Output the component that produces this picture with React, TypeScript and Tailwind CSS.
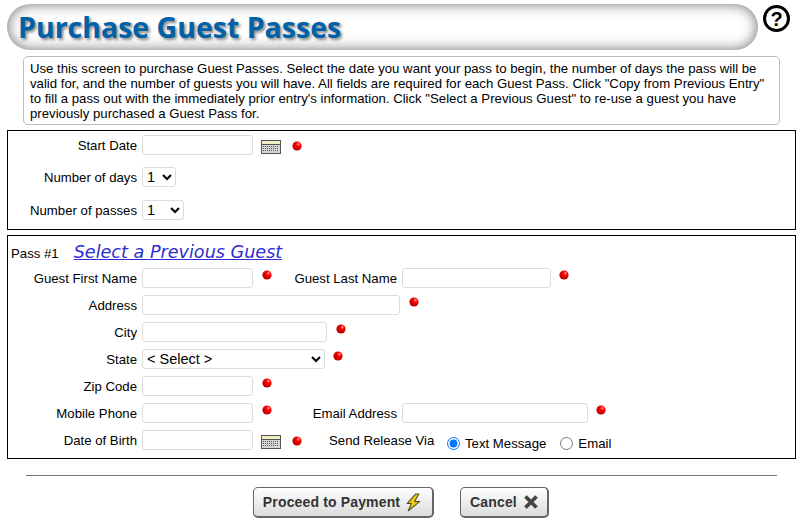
import type { ReactNode } from "react";

const inputClass =
    "h-5 rounded-[3px] border border-[#dcdcdc] bg-white outline-none";
const selectClass =
    "h-5 rounded-[3px] border border-[#dcdcdc] bg-white text-[14.5px] leading-none text-black";

const RedDot = ({ className = "" }: { className?: string }) => (
    <svg viewBox="0 0 10 10" className={`h-[10px] w-[10px] shrink-0 ${className}`}>
        <defs>
            <radialGradient id="dot" cx="65%" cy="30%" r="75%">
                <stop offset="0%" stopColor="#ffb0b0" />
                <stop offset="30%" stopColor="#ff0000" />
                <stop offset="100%" stopColor="#b00000" />
            </radialGradient>
        </defs>
        <circle cx="5" cy="5" r="4.6" fill="url(#dot)" />
    </svg>
);

const CalendarIcon = ({ className = "" }: { className?: string }) => (
    <svg viewBox="0 0 20 14" className={`h-[14px] w-5 shrink-0 ${className}`}>
        <rect x="0.5" y="0.5" width="19" height="13" fill="#d6d6d6" stroke="#555" />
        <rect x="1" y="1" width="18" height="3" fill="#f3efc0" />
        <rect x="1" y="4" width="18" height="1" fill="#555" />
        <path d="M2 6.5h12M2 8.5h12M2 10.5h12" stroke="#555" strokeWidth="1" strokeDasharray="1 1" />
        <path d="M14 6.5h4M14 8.5h4M14 10.5h4" stroke="#e02020" strokeWidth="1" strokeDasharray="1 1" />
    </svg>
);

const Label = ({ children, className = "w-[134px]" }: { children: ReactNode; className?: string }) => (
    <label className={`mt-[2px] shrink-0 pr-[5px] text-right text-[13.2px] leading-4 text-black ${className}`}>
        {children}
    </label>
);

const Row = ({ children, className = "h-[27px]" }: { children: ReactNode; className?: string }) => (
    <div className={`flex items-center ${className}`}>{children}</div>
);

const App = () => {
    return (
        <div className="h-[523px] w-[810px] overflow-hidden bg-white font-['Liberation_Sans',Arial,sans-serif] text-black">

            {/* TITLE */}
            <div className="flex items-start pl-[7px] pt-1">
                <div className="flex h-[46px] w-[751px] items-center rounded-full bg-white pl-[11px] shadow-[inset_0_0_14px_#707070]">
                    <h1 className="font-['Open_Sans',sans-serif] text-[28.5px] font-bold leading-none text-[#0061a9] [text-shadow:2px_2px_3px_#888]">
                        Purchase Guest Passes
                    </h1>
                </div>
                <div className="ml-[5px] mt-[1px] flex h-[27px] w-[27px] items-center justify-center rounded-full border-[3px] border-black text-xl font-bold leading-none">
                    ?
                </div>
            </div>

            {/* HELP */}
            <div className="ml-[23px] mt-[6px] h-[69px] w-[757px] whitespace-nowrap rounded-[5px] border border-[#bbbbbb] px-[6px] pt-1 text-[13.2px] leading-[15px]">
                Use this screen to purchase Guest Passes. Select the date you want your pass to begin, the number of days the pass will be
                <br />
                valid for, and the number of guests you will have. All fields are required for each Guest Pass. Click "Copy from Previous Entry"
                <br />
                to fill a pass out with the immediately prior entry's information. Click "Select a Previous Guest" to re-use a guest you have
                <br />
                previously purchased a Guest Pass for.
            </div>

            {/* PASS OPTIONS */}
            <div className="ml-[7px] mt-[5px] h-[100px] w-[789px] border border-black pt-1">
                <Row className="h-5">
                    <Label>Start Date</Label>
                    <input className={`${inputClass} w-[111px]`} />
                    <CalendarIcon className="ml-2 mt-1" />
                    <RedDot className="ml-[11px] mt-[2px]" />
                </Row>
                <Row className="mt-3 h-5">
                    <Label>Number of days</Label>
                    <select className={`${selectClass} w-[34px]`}>
                        <option>1</option>
                    </select>
                </Row>
                <Row className="mt-[13px] h-5">
                    <Label>Number of passes</Label>
                    <select className={`${selectClass} w-[42px]`}>
                        <option>1</option>
                    </select>
                </Row>
            </div>

            {/* PASS #1 */}
            <div className="ml-[7px] mt-[5px] h-[224px] w-[789px] border border-black pt-[3px]">
                <div className="flex h-[25px] items-center">
                    <span className="ml-[3px] mt-1 text-[13.2px] leading-4">Pass #1</span>
                    <a className="ml-[15px] font-['DejaVu_Sans',sans-serif] text-[17.6px] italic leading-5 text-[#2e2ecf] underline">
                        Select a Previous Guest
                    </a>
                </div>

                <Row>
                    <Label>Guest First Name</Label>
                    <input className={`${inputClass} w-[111px]`} />
                    <RedDot className="ml-[9px] -mt-[6px]" />
                    <Label className="w-[130px]">Guest Last Name</Label>
                    <input className={`${inputClass} w-[149px]`} />
                    <RedDot className="ml-[8px] -mt-[6px]" />
                </Row>
                <Row>
                    <Label>Address</Label>
                    <input className={`${inputClass} w-[258px]`} />
                    <RedDot className="ml-[9px] -mt-[6px]" />
                </Row>
                <Row>
                    <Label>City</Label>
                    <input className={`${inputClass} w-[185px]`} />
                    <RedDot className="ml-[9px] -mt-[6px]" />
                </Row>
                <Row>
                    <Label>State</Label>
                    <select className={`${selectClass} w-[183px]`}>
                        <option>&lt; Select &gt;</option>
                    </select>
                    <RedDot className="ml-[8px] -mt-[6px]" />
                </Row>
                <Row>
                    <Label>Zip Code</Label>
                    <input className={`${inputClass} w-[111px]`} />
                    <RedDot className="ml-[9px] -mt-[6px]" />
                </Row>
                <Row>
                    <Label>Mobile Phone</Label>
                    <input className={`${inputClass} w-[111px]`} />
                    <RedDot className="ml-[9px] -mt-[6px]" />
                    <Label className="w-[130px]">Email Address</Label>
                    <input className={`${inputClass} w-[186px]`} />
                    <RedDot className="ml-[8px] -mt-[6px]" />
                </Row>
                <Row>
                    <Label>Date of Birth</Label>
                    <input className={`${inputClass} w-[111px]`} />
                    <CalendarIcon className="ml-2 mt-1" />
                    <RedDot className="ml-[11px] mt-[2px]" />
                    <span className="ml-[27px] mt-[2px] w-[106px] whitespace-nowrap text-[13.2px] leading-4">Send Release Via</span>
                    <label className="ml-[12px] mt-[8px] flex items-center text-[13.2px] leading-4">
                        <input type="radio" name="via" defaultChecked className="h-[13px] w-[13px]" />
                        <span className="ml-[5px]">Text Message</span>
                    </label>
                    <label className="ml-[14px] mt-[8px] flex items-center text-[13.2px] leading-4">
                        <input type="radio" name="via" className="h-[13px] w-[13px]" />
                        <span className="ml-[5px]">Email</span>
                    </label>
                </Row>
            </div>

            <div className="ml-[26px] mt-[16px] h-px w-[751px] bg-[#777777]" />

            {/* BUTTONS */}
            <div className="ml-[253px] mt-[11px] flex gap-[26px]">
                <button className="flex h-[31px] w-[181px] items-center justify-center gap-1 rounded-[5px] border border-[#666] border-b-2 border-r-2 bg-gradient-to-b from-white to-[#dcdcdc] text-sm font-bold tracking-[0.15px] text-[#333]">
                    Proceed to Payment
                    <svg viewBox="0 0 18 18" className="h-[19px] w-[19px]">
                        <path
                            d="M11 1 3 10h4l-3 7 11-9h-5l4-7z"
                            fill="#f4cf00"
                            stroke="#4a4a2a"
                            strokeWidth="1"
                            strokeLinejoin="round"
                        />
                    </svg>
                </button>
                <button className="flex h-[31px] w-[89px] items-center justify-center gap-[7px] rounded-[5px] border border-[#666] border-b-2 border-r-2 bg-gradient-to-b from-white to-[#dcdcdc] text-sm font-bold tracking-[0.15px] text-[#333]">
                    Cancel
                    <svg viewBox="0 0 14 14" className="h-[14px] w-[14px]">
                        <path d="M1.5 1.5 12.5 12.5M12.5 1.5 1.5 12.5" stroke="#444" strokeWidth="3.8" />
                    </svg>
                </button>
            </div>

        </div>
    );
};

export default App;
